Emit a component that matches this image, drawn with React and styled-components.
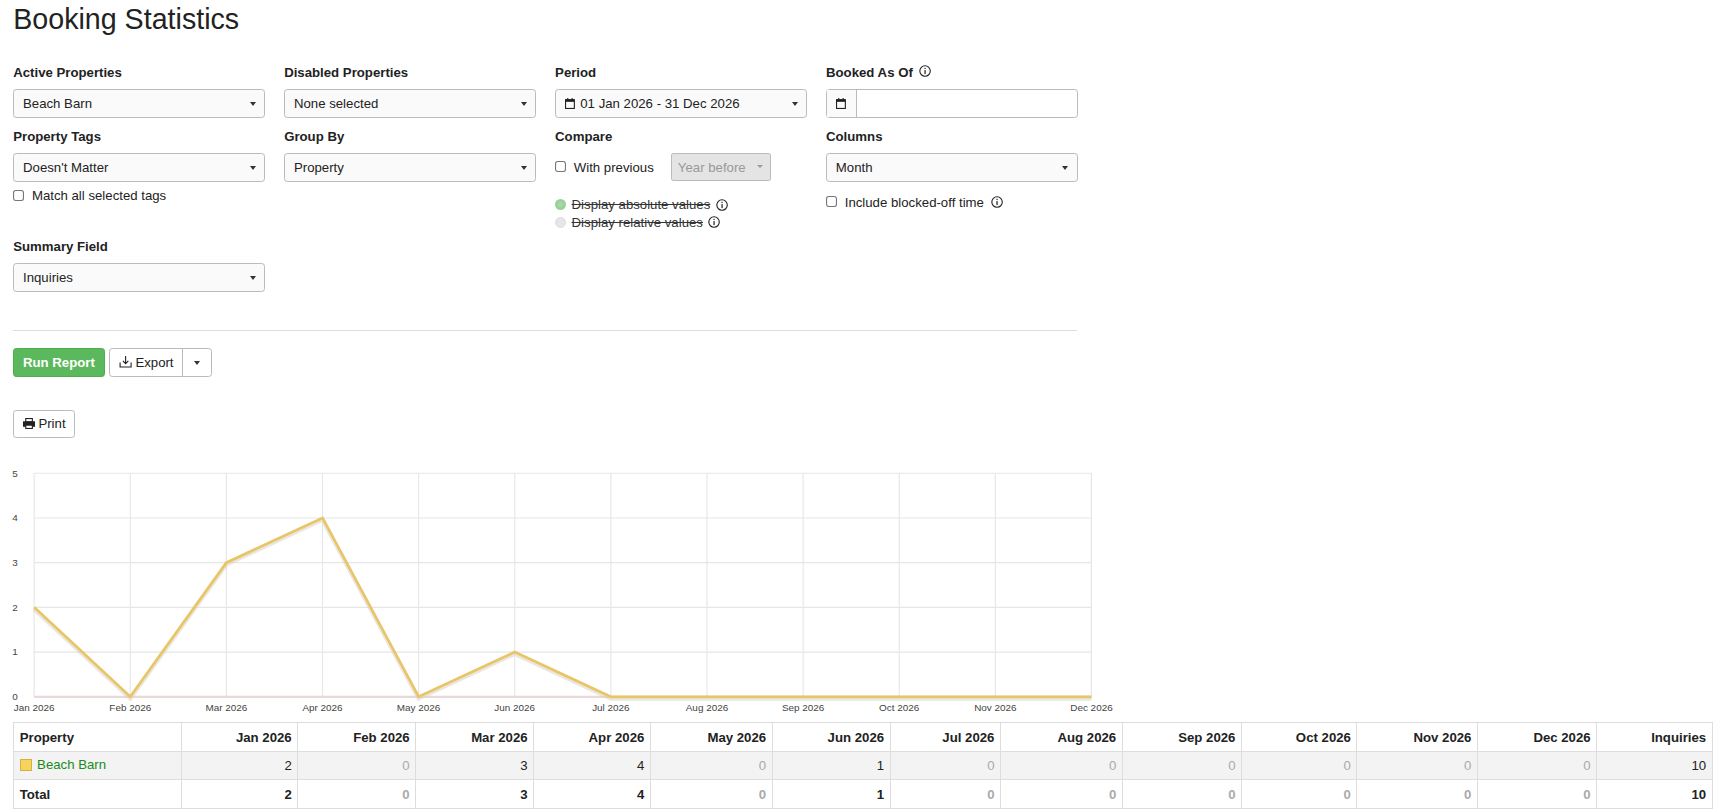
import React from 'react'
import styled, { createGlobalStyle } from 'styled-components'

const Global = createGlobalStyle`
body { margin: 0; font-family: "Liberation Sans", Arial, sans-serif; font-size: 12px; color: #222; background: #fff; }
`

const Page = styled.div`padding: 0 12px; zoom: 1.1014;`
const Title = styled.h1`font-size: 26px; font-weight: 400; margin: 0; padding-top: 3px; height: 54px; line-height: 30px;`
const Grid = styled.div`
  display: grid; grid-template-columns: repeat(4, 229px); column-gap: 17px; width: 966px;
`
const Field = styled.div`display: flex; flex-direction: column; height: ${p => p.h || 58}px;`
const Label = styled.div`font-weight: 700; height: 22px; padding-top: 2px; display: flex; gap: 6px; align-items: flex-start;`
const Select = styled.div`
  height: 26px; border: 1px solid #bbb; border-radius: 3px; background: #fafafa; box-sizing: border-box;
  display: flex; align-items: center; padding: 0 8px; gap: 5px; position: relative;
  &:after { content: ''; position: absolute; right: 8px; top: 11px; border: 3px solid transparent; border-top: 4px solid #333; }
`
const DateInput = styled.div`
  height: 26px; border: 1px solid #bbb; border-radius: 3px; box-sizing: border-box; display: flex;
  span { width: 26px; border-right: 1px solid #bbb; display: flex; align-items: center; justify-content: center; background: #fafafa; }
`
const Check = styled.label`display: flex; align-items: center; gap: 6px; margin-top: ${p => p.mt || 0}px;
  input { margin: 0; width: 11px; height: 11px; }
`
const Radio = styled.div`display: flex; align-items: center; gap: 5px; height: 16px; color: #333;
  i { width: 10px; height: 10px; border-radius: 50%; background: ${p => p.on ? '#a8d8a6' : '#e6e6e6'}; box-sizing: border-box; border: ${p => p.on ? '3px solid #9bd199' : '1px solid #ddd'}; }
  s { text-decoration: line-through; }
`
const Mini = styled.div`
  height: 24px; padding: 0 22px 0 5px; margin-left: 10px; background: #e4e4e4; border: 1px solid #bbb; border-radius: 2px; color: #999;
  display: flex; align-items: center; position: relative;
  &:after { content: ''; position: absolute; right: 6px; top: 10px; border: 3px solid transparent; border-top: 3px solid #999; }
`
const Divider = styled.hr`border: 0; border-top: 1px solid #ddd; width: 966px; margin: 27px 0 15px;`
const Buttons = styled.div`display: flex; gap: 4px;`
const Btn = styled.div`
  height: 26px; box-sizing: border-box; display: flex; align-items: center; gap: 3px; padding: 0 8px; border-radius: 3px;
  background: ${p => p.green ? '#5cb85c' : '#fff'}; color: ${p => p.green ? '#fff' : '#222'};
  border: 1px solid ${p => p.green ? '#4cae4c' : '#bbb'}; font-weight: ${p => p.green ? 700 : 400};
`
const Split = styled.div`display: flex; border: 1px solid #bbb; border-radius: 3px; height: 26px; box-sizing: border-box;
  div { display: flex; align-items: center; gap: 3px; padding: 0 8px; }
  div + div { border-left: 1px solid #bbb; padding: 0 10px; }
`
const Caret = styled.b`border: 3px solid transparent; border-top: 4px solid #333; margin-top: 4px;`
const PrintRow = styled.div`margin-top: 30px;`
const Table = styled.table`
  width: 1543px; border-collapse: collapse; margin-top: 6px;
  td, th { border: 1px solid #ddd; height: 25px; padding: 0 5px; text-align: right; }
  th { font-weight: 700; }
  td:first-child, th:first-child { text-align: left; width: 141px; }
  tr.alt td { background: #f3f3f3; }
  tr.total td { font-weight: 700; }
`
const Zero = styled.span`color: #aaa;`
const Prop = styled.span`color: #1a8a1a; display: inline-flex; align-items: center; gap: 5px;
  i { width: 9px; height: 9px; background: #f5d35c; border: 1px solid #d8b040; }`

const Info = () => (
  <svg width="11" height="11" viewBox="0 0 12 12"><circle cx="6" cy="6" r="5.2" fill="none" stroke="#222" strokeWidth="1.1"/><rect x="5.4" y="5" width="1.2" height="4" fill="#222"/><rect x="5.4" y="2.8" width="1.2" height="1.2" fill="#222"/></svg>
)
const Cal = () => (
  <svg width="9" height="10" viewBox="0 0 9 10"><rect x="0.5" y="1.5" width="8" height="8" fill="none" stroke="#222"/><rect x="0.5" y="1.5" width="8" height="2" fill="#222"/><rect x="2" y="0" width="1" height="2" fill="#222"/><rect x="6" y="0" width="1" height="2" fill="#222"/></svg>
)

const months = ['Jan', 'Feb', 'Mar', 'Apr', 'May', 'Jun', 'Jul', 'Aug', 'Sep', 'Oct', 'Nov', 'Dec'].map(m => m + ' 2026')
const data = [2, 0, 3, 4, 0, 1, 0, 0, 0, 0, 0, 0]

const Chart = () => {
  const x0 = 31, x1 = 991, y0 = 612, y1 = 409
  const dx = (x1 - x0) / 11, dy = (y0 - y1) / 5
  const pts = data.map((v, i) => `${x0 + i * dx},${y0 - v * dy}`).join(' ')
  return (
    <svg width="1020" height="232" viewBox="0 397 1020 232" style={{ display: 'block', marginLeft: -12, marginTop: 20 }}>
      {[0, 1, 2, 3, 4, 5].map(v => (
        <g key={v}>
          <line x1={x0} x2={x1} y1={y0 - v * dy} y2={y0 - v * dy} stroke="#e6e6e6" />
          <text x="11" y={y0 - v * dy + 3} fontSize="9" fill="#444" fontFamily="Liberation Sans">{v}</text>
        </g>
      ))}
      {months.map((m, i) => (
        <g key={m}>
          <line x1={x0 + i * dx} x2={x0 + i * dx} y1={y1} y2={y0} stroke="#e6e6e6" />
          <text x={x0 + i * dx} y="625" fontSize="9" fill="#444" textAnchor="middle" fontFamily="Liberation Sans">{m}</text>
        </g>
      ))}
      <line x1={x1} x2={x1} y1={y1} y2={y0} stroke="#e6e6e6" />
      <line x1={x0} x2={x1} y1={y0} y2={y0} stroke="#e8d8d8" strokeWidth="2" />
      <polyline points={pts + ` ${x1},${y0}`} fill="none" stroke="#d8d0c0" strokeWidth="4" opacity="0.5" transform="translate(0,1.5)" />
      <polyline points={pts + ` ${x1},${y0}`} fill="none" stroke="#e8c566" strokeWidth="2.5" />
    </svg>
  )
}

export default function App() {
  const total = data.reduce((a, b) => a + b, 0)
  const cell = v => <td>{v === 0 ? <Zero>0</Zero> : v}</td>
  return (
    <Page>
      <Global />
      <Title>Booking Statistics</Title>
      <Grid>
        <Field><Label>Active Properties</Label><Select>Beach Barn</Select></Field>
        <Field><Label>Disabled Properties</Label><Select>None selected</Select></Field>
        <Field><Label>Period</Label><Select><Cal />01 Jan 2026 - 31 Dec 2026</Select></Field>
        <Field><Label>Booked As Of <Info /></Label><DateInput><span><Cal /></span></DateInput></Field>

        <Field h={100}><Label>Property Tags</Label><Select>Doesn't Matter</Select><Check mt={6}><input type="checkbox" />Match all selected tags</Check></Field>
        <Field h={100}><Label>Group By</Label><Select>Property</Select></Field>
        <Field h={100}>
          <Label>Compare</Label>
          <Check><input type="checkbox" />With previous<Mini>Year before</Mini></Check>
          <div style={{ height: 13 }} />
          <Radio on><i /><s>Display absolute values</s><Info /></Radio>
          <Radio><i /><s>Display relative values</s><Info /></Radio>
        </Field>
        <Field h={100}><Label>Columns</Label><Select>Month</Select><Check mt={12}><input type="checkbox" />Include blocked-off time <Info /></Check></Field>

        <Field><Label>Summary Field</Label><Select>Inquiries</Select></Field>
      </Grid>
      <Divider />
      <Buttons>
        <Btn green>Run Report</Btn>
        <Split>
          <div>
            <svg width="12" height="11" viewBox="0 0 12 11"><path d="M1 6v4h10V6" fill="none" stroke="#222"/><path d="M6 0v7M3.5 4.5L6 7l2.5-2.5" fill="none" stroke="#222"/></svg>
            Export
          </div>
          <div><Caret /></div>
        </Split>
      </Buttons>
      <PrintRow>
        <Btn as="span" style={{ display: 'inline-flex' }}>
          <svg width="11" height="10" viewBox="0 0 11 10"><rect x="2.5" y="0.5" width="6" height="3" fill="none" stroke="#222"/><rect x="0" y="3" width="11" height="5" fill="#222"/><rect x="2.5" y="6.5" width="6" height="3" fill="#fff" stroke="#222"/></svg>
          Print
        </Btn>
      </PrintRow>
      <Chart />
      <Table>
        <thead>
          <tr><th>Property</th>{months.map(m => <th key={m}>{m}</th>)}<th>Inquiries</th></tr>
        </thead>
        <tbody>
          <tr className="alt"><td><Prop><i />Beach Barn</Prop></td>{data.map((v, i) => <React.Fragment key={i}>{cell(v)}</React.Fragment>)}<td>{total}</td></tr>
          <tr className="total"><td>Total</td>{data.map((v, i) => <React.Fragment key={i}>{cell(v)}</React.Fragment>)}<td>{total}</td></tr>
        </tbody>
      </Table>
    </Page>
  )
}
